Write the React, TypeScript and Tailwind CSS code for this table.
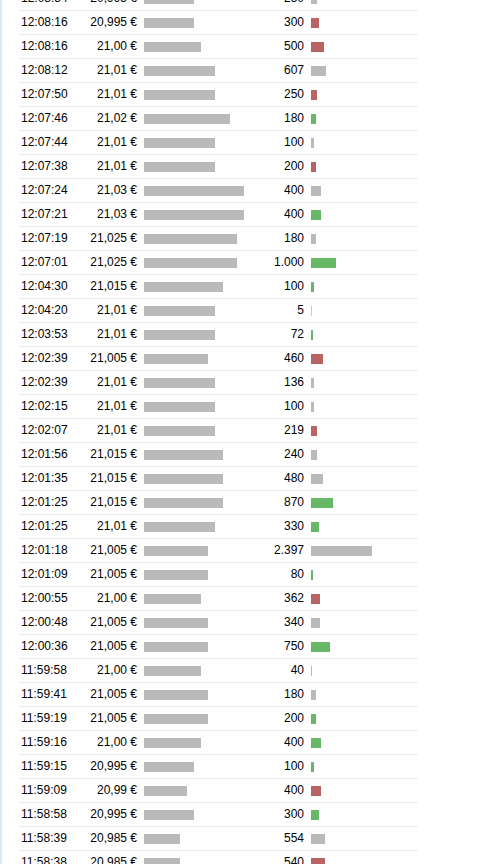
import React from "react";

type Trade = {
  time: string;
  price: number;
  volume: number;
  side: "buy" | "sell" | "none";
};

const trades: Trade[] = [
  { time: "12:08:34", price: 20.995, volume: 250, side: "none" },
  { time: "12:08:16", price: 20.995, volume: 300, side: "sell" },
  { time: "12:08:16", price: 21.0, volume: 500, side: "sell" },
  { time: "12:08:12", price: 21.01, volume: 607, side: "none" },
  { time: "12:07:50", price: 21.01, volume: 250, side: "sell" },
  { time: "12:07:46", price: 21.02, volume: 180, side: "buy" },
  { time: "12:07:44", price: 21.01, volume: 100, side: "none" },
  { time: "12:07:38", price: 21.01, volume: 200, side: "sell" },
  { time: "12:07:24", price: 21.03, volume: 400, side: "none" },
  { time: "12:07:21", price: 21.03, volume: 400, side: "buy" },
  { time: "12:07:19", price: 21.025, volume: 180, side: "none" },
  { time: "12:07:01", price: 21.025, volume: 1000, side: "buy" },
  { time: "12:04:30", price: 21.015, volume: 100, side: "buy" },
  { time: "12:04:20", price: 21.01, volume: 5, side: "none" },
  { time: "12:03:53", price: 21.01, volume: 72, side: "buy" },
  { time: "12:02:39", price: 21.005, volume: 460, side: "sell" },
  { time: "12:02:39", price: 21.01, volume: 136, side: "none" },
  { time: "12:02:15", price: 21.01, volume: 100, side: "none" },
  { time: "12:02:07", price: 21.01, volume: 219, side: "sell" },
  { time: "12:01:56", price: 21.015, volume: 240, side: "none" },
  { time: "12:01:35", price: 21.015, volume: 480, side: "none" },
  { time: "12:01:25", price: 21.015, volume: 870, side: "buy" },
  { time: "12:01:25", price: 21.01, volume: 330, side: "buy" },
  { time: "12:01:18", price: 21.005, volume: 2397, side: "none" },
  { time: "12:01:09", price: 21.005, volume: 80, side: "buy" },
  { time: "12:00:55", price: 21.0, volume: 362, side: "sell" },
  { time: "12:00:48", price: 21.005, volume: 340, side: "none" },
  { time: "12:00:36", price: 21.005, volume: 750, side: "buy" },
  { time: "11:59:58", price: 21.0, volume: 40, side: "none" },
  { time: "11:59:41", price: 21.005, volume: 180, side: "none" },
  { time: "11:59:19", price: 21.005, volume: 200, side: "buy" },
  { time: "11:59:16", price: 21.0, volume: 400, side: "buy" },
  { time: "11:59:15", price: 20.995, volume: 100, side: "buy" },
  { time: "11:59:09", price: 20.99, volume: 400, side: "sell" },
  { time: "11:58:58", price: 20.995, volume: 300, side: "buy" },
  { time: "11:58:39", price: 20.985, volume: 554, side: "none" },
  { time: "11:58:38", price: 20.985, volume: 540, side: "sell" },
];

// german style: 21,01 / 20,995 — at least two decimals
const formatPrice = (p: number) => {
  let s = p.toFixed(3);
  if (s.endsWith("0")) s = s.slice(0, -1);
  return s.replace(".", ",") + " €";
};

const formatVolume = (v: number) =>
  v.toString().replace(/\B(?=(\d{3})+(?!\d))/g, ".");

const priceBarWidth = (p: number) => {
  const steps = Math.round((p - 20.985) / 0.005);
  return Math.round(36 + steps * 7.1 - 0.1);
};

const volumeBarWidth = (v: number) => Math.max(1, Math.round(v / 39.5));

const sideColor = {
  buy: "bg-[#67b967]",
  sell: "bg-[#b86464]",
  none: "bg-[#bababa]",
};

const App: React.FC = () => {
  return (
    <div className="h-[864px] overflow-hidden bg-white border-l-2 border-[#d4ebfb] font-['Liberation_Sans',Arial,sans-serif] text-[12px] text-black">
      <div className="-mt-[13px] ml-[16px] w-[400px]">
        {trades.map((t, i) => (
          <div
            key={i}
            className="flex items-center h-[24px] leading-[23px] border-b border-[#ebebeb]"
          >
            <div className="w-[64px] pl-[3px]">{t.time}</div>
            <div className="w-[58px] pr-[3px] text-right whitespace-nowrap">
              {formatPrice(t.price)}
            </div>
            <div className="w-[106px] pl-[4px] flex items-center">
              <div
                className="h-[10px] bg-[#bababa]"
                style={{ width: priceBarWidth(t.price) }}
              />
            </div>
            <div className="w-[61px] pr-[3px] text-right">
              {formatVolume(t.volume)}
            </div>
            <div className="flex-1 pl-[4px] flex items-center">
              <div
                className={`h-[10px] ${
                  t.volume < 20 ? "bg-[#c8c8c8]" : sideColor[t.side]
                }`}
                style={{ width: volumeBarWidth(t.volume) }}
              />
            </div>
          </div>
        ))}
      </div>
    </div>
  );
};

export default App;
